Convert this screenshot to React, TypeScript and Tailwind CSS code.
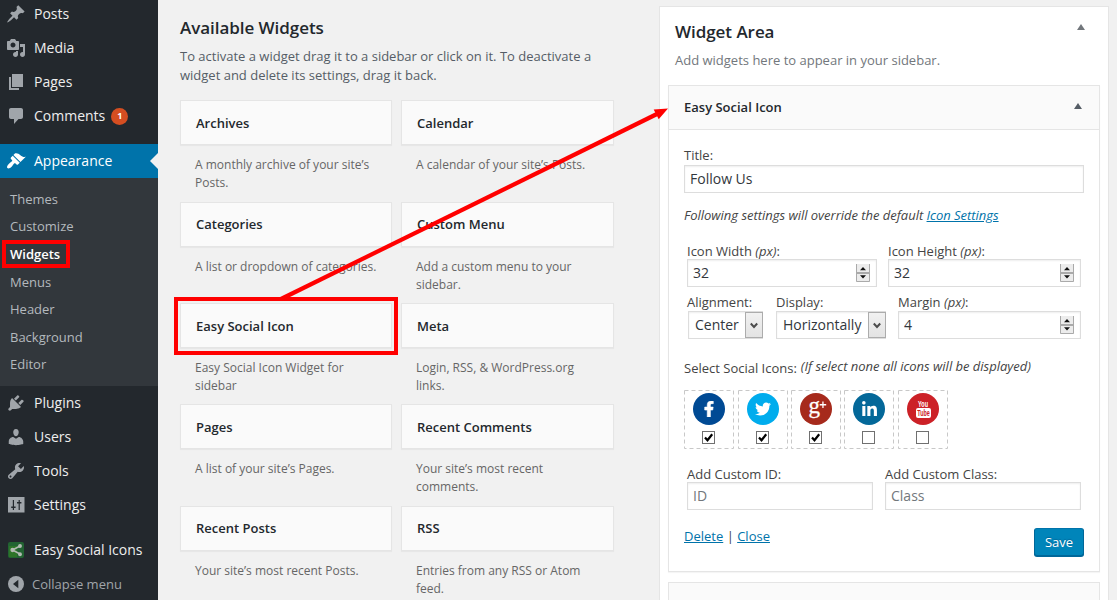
import React from "react";
import { FaFacebookF, FaTwitter, FaLinkedinIn } from "react-icons/fa";

const icons = {
  posts:
    "M10.44 3.02l1.82-1.82 6.36 6.35-1.83 1.82c-1.05-.68-2.48-.57-3.41.36l-.75.75c-.92.93-1.04 2.35-.35 3.41l-1.83 1.82-2.41-2.41-2.8 2.79c-.42.42-3.38 2.71-3.8 2.29s1.86-3.39 2.28-3.81l2.79-2.79L4.1 9.36l1.83-1.82c1.05.69 2.48.57 3.4-.36l.75-.75c.93-.92 1.05-2.35.36-3.41z",
  media:
    "M13 11V4c0-.55-.45-1-1-1h-1.67L9 1H5L3.67 3H2c-.55 0-1 .45-1 1v7c0 .55.45 1 1 1h10c.55 0 1-.45 1-1zM7 4.5c1.38 0 2.5 1.12 2.5 2.5S8.38 9.5 7 9.5 4.5 8.38 4.5 7 5.62 4.5 7 4.5zM14 6h5v10.5c0 1.38-1.12 2.5-2.5 2.5S14 17.88 14 16.5s1.12-2.5 2.5-2.5c.17 0 .34.02.5.05V9h-3V6zm-4 8.05V13h2v3.5c0 1.38-1.12 2.5-2.5 2.5S7 17.88 7 16.5 8.12 14 9.5 14c.17 0 .34.02.5.05z",
  pages: "M6 15V2h11v13H6zm-1 1h8v2H3V5h2v11z",
  comments:
    "M5 2h10c1.1 0 2 .9 2 2v7c0 1.1-.9 2-2 2h-2.500l-4.500 5v-5H5c-1.1 0-2-.9-2-2V4c0-1.1.9-2 2-2z",
  appearance:
    "M14.48 11.06L7.41 3.99l1.5-1.5c.5-.56 2.3-.47 3.51.32 1.21.8 1.43 1.28 2.91 2.1 1.18.64 2.45 1.26 4.45.85zm-.71.71L6.7 4.7 4.93 6.47c-.39.39-.39 1.02 0 1.41l1.06 1.06c.39.39.39 1.03 0 1.42-.6.6-1.43 1.11-2.21 1.69-.35.26-.7.53-1.01.84C1.43 14.23.4 16.08 1.4 17.07c.99 1 2.84-.03 4.18-1.36.31-.31.58-.66.85-1.02.57-.78 1.08-1.61 1.69-2.21.39-.39 1.02-.39 1.41 0l1.06 1.06c.39.39 1.02.39 1.41 0z",
  plugins:
    "M13.11 4.36L9.87 7.6 8 5.73l3.24-3.24c.35-.34 1.05-.2 1.56.32.52.51.66 1.21.31 1.55zm-8 1.77l.91-1.12 9.01 9.01-1.19.84c-.71.71-2.63 1.16-3.82 1.16H6.14L4.9 17.26c-.59.59-1.54.59-2.12 0-.59-.58-.59-1.53 0-2.12l1.24-1.24v-3.88c0-1.13.4-3.19 1.09-3.89zm7.26 3.97l3.24-3.24c.34-.35 1.04-.21 1.55.31.52.51.66 1.21.31 1.55l-3.24 3.25z",
  users:
    "M10 9.25c-2.27 0-2.73-3.44-2.73-3.44C7 4.02 7.82 2 9.97 2c2.16 0 2.98 2.02 2.71 3.81 0 0-.41 3.44-2.68 3.44zm0 2.57L12.72 10c2.39 0 4.52 2.33 4.52 4.53v2.49s-3.65 1.13-7.24 1.13c-3.65 0-7.24-1.13-7.24-1.13v-2.49c0-2.25 1.94-4.48 4.47-4.48z",
  tools:
    "M16.68 9.77c-1.34 1.34-3.3 1.67-4.95.99l-5.41 6.52c-.99.99-2.59.99-3.58 0s-.99-2.59 0-3.57l6.52-5.42c-.68-1.65-.35-3.61.99-4.95 1.28-1.28 3.12-1.62 4.72-1.06l-2.89 2.89 2.82 2.82 2.86-2.87c.53 1.58.18 3.39-1.08 4.65zM3.81 16.21c.4.39 1.04.39 1.43 0 .4-.4.4-1.04 0-1.43-.39-.4-1.03-.4-1.43 0-.39.39-.39 1.03 0 1.43z",
  settings:
    "M2 2h16.500v15.500h-16.500zM6.800 5v6.500H5.200v1.500h1.600v2h1.200v-2h1.600v-1.500h-1.600V5zM12.600 5v2H11v1.500h1.600V15h1.200V8.500h1.600V7h-1.600V5z",
};

function Glyph({ d }: { d: string }) {
  return (
    <svg viewBox="0 0 20 20" className="h-5 w-5 shrink-0" fill="currentColor">
      <path fillRule="evenodd" d={d} />
    </svg>
  );
}

function MenuRow({ d, label, badge }: { d: string; label: string; badge?: string }) {
  return (
    <a className="flex h-[34px] items-center gap-2 pl-1.5 text-[14px] text-[#eeeeee]">
      <span className="text-[#a0a5aa]">
        <Glyph d={d} />
      </span>
      <span className="pb-0.5">{label}</span>
      {badge && (
        <span className="-ml-0.5 flex h-[17px] w-[17px] items-center justify-center rounded-full bg-[#d54e21] text-[9px] font-bold text-white">
          {badge}
        </span>
      )}
    </a>
  );
}

const submenu = ["Themes", "Customize", "Widgets", "Menus", "Header", "Background", "Editor"];

function Sidebar() {
  return (
    <nav className="h-[600px] w-[158px] shrink-0 overflow-hidden bg-[#23282d]">
      <div className="-mt-[3px]">
        <MenuRow d={icons.posts} label="Posts" />
        <MenuRow d={icons.media} label="Media" />
        <MenuRow d={icons.pages} label="Pages" />
        <MenuRow d={icons.comments} label="Comments" badge="1" />
      </div>
      <a className="mt-[11px] flex h-[34px] items-center gap-2 bg-[#0073aa] pl-1.5 text-[14px] text-white">
        <Glyph d={icons.appearance} />
        <span className="pb-0.5">Appearance</span>
        <svg viewBox="0 0 8 16" className="ml-auto h-4 w-2" fill="#f1f1f1">
          <path d="M8 0v16L0 8z" />
        </svg>
      </a>
      <div className="h-[208px] bg-[#32373c] pt-[7.75px]">
        {submenu.map((s) => (
          <a
            key={s}
            className={
              s === "Widgets"
                ? "relative flex h-[27.6px] items-center pl-2.5 text-[13px] font-semibold text-white"
                : "flex h-[27.6px] items-center pl-2.5 text-[13px] text-[#b4b9be]"
            }
          >
            {s}
            {s === "Widgets" && (
              <span className="absolute top-[-0.95px] left-0.5 h-7 w-[68px] border-4 border-[#ff0000]" />
            )}
          </a>
        ))}
      </div>
      <MenuRow d={icons.plugins} label="Plugins" />
      <MenuRow d={icons.users} label="Users" />
      <MenuRow d={icons.tools} label="Tools" />
      <MenuRow d={icons.settings} label="Settings" />
      <a className="mt-[11px] flex h-[34px] items-center gap-2.5 pl-2 text-[14px] whitespace-nowrap text-[#eeeeee]">
        <svg viewBox="0 0 16 16" className="h-4 w-4 shrink-0">
          <rect width="16" height="16" rx="2" fill="#226332" />
          <rect x="1" y="4" width="8" height="11" fill="#2d7428" />
          <g fill="#b3bab3" stroke="#b3bab3" strokeWidth="1.5">
            <path d="M12 4L4.500 8l7.500 4" fill="none" />
            <circle cx="12" cy="4" r="1.200" />
            <circle cx="4.500" cy="8" r="1.400" />
            <circle cx="12" cy="12.200" r="1.200" />
          </g>
        </svg>
        <span className="pb-0.5">Easy Social Icons</span>
      </a>
      <a className="flex h-[34px] items-center gap-2 pl-2 text-[13px] text-[#a0a5aa]">
        <svg viewBox="0 0 16 16" className="h-4 w-4 shrink-0">
          <circle cx="8" cy="8" r="8" fill="#a0a5aa" />
          <path d="M10.300 3.800v8.400L5 8z" fill="#23282d" />
        </svg>
        <span className="pt-px">Collapse menu</span>
      </a>
    </nav>
  );
}

const widgets: [string, string][] = [
  ["Archives", "A monthly archive of your site’s Posts."],
  ["Calendar", "A calendar of your site’s Posts."],
  ["Categories", "A list or dropdown of categories."],
  ["Custom Menu", "Add a custom menu to your sidebar."],
  ["Easy Social Icon", "Easy Social Icon Widget for sidebar"],
  ["Meta", "Login, RSS, & WordPress.org links."],
  ["Pages", "A list of your site’s Pages."],
  ["Recent Comments", "Your site’s most recent comments."],
  ["Recent Posts", "Your site’s most recent Posts."],
  ["RSS", "Entries from any RSS or Atom feed."],
];

function AvailableWidgets() {
  return (
    <section className="w-[434px] shrink-0">
      <h2 className="mt-4 text-[17px] leading-6 font-semibold tracking-[-0.05px] text-[#23282d]">Available Widgets</h2>
      <p className="mt-[7px] h-[53.15px] text-[13px] leading-[19px] text-[#555d66]">
        To activate a widget drag it to a sidebar or click on it. To deactivate a widget and delete its settings, drag
        it back.
      </p>
      <div className="grid auto-rows-[101.4px] grid-cols-[212px_213px] gap-x-[9px]">
        {widgets.map(([title, text]) => (
          <div key={title} className="relative">
            <h3 className="flex h-[45px] items-center border border-[#e5e5e5] bg-[#fafafa] pt-[1.9px] pl-[15px] text-[13px] font-semibold text-[#23282d] shadow-[0_1px_1px_rgba(0,0,0,0.04)]">
              {title}
            </h3>
            <p className="mt-[11px] pr-3 pl-[15px] text-[12px] leading-[18px] text-[#666666]">{text}</p>
            {title === "Easy Social Icon" && (
              <span className="absolute -top-1.5 -left-1.5 h-[58px] w-[224px] border-4 border-[#ff0000]" />
            )}
          </div>
        ))}
      </div>
    </section>
  );
}

const fieldBox =
  "h-7 w-full border border-[#dddddd] bg-white px-[5px] pb-0.5 text-[14px] text-[#32373c] shadow-[inset_0_1px_2px_rgba(0,0,0,0.07)] outline-none placeholder:text-[#72777c]";

function NumberField({ value }: { value: string }) {
  return (
    <div className="relative flex">
      <input className={fieldBox} defaultValue={value} />
      <svg viewBox="0 0 14 18" className="absolute top-[5px] right-[7px] h-[18px] w-3.5">
        <rect width="14" height="18" fill="#ececec" />
        <path d="M.5 0v17.500h13V0M.5 8.500h13M.5 9.500h13" stroke="#aaaaaa" fill="none" />
        <path d="M7 3l3 3.200H4zM7 14.500l3-3.200H4z" fill="#111111" />
      </svg>
    </div>
  );
}

function SelectBox({ value }: { value: string }) {
  return (
    <div className="flex h-7 items-stretch justify-between border border-[#dddddd] bg-white text-[14px] text-[#32373c] shadow-[inset_0_1px_2px_rgba(0,0,0,0.07)]">
      <span className="flex items-center pb-0.5 pl-1.5">{value}</span>
      <span className="-mr-px flex w-[18px] items-center justify-center border border-[#acacac] bg-linear-to-b from-[#f1f1f1] to-[#e3e3e3] pr-px">
        <svg viewBox="0 0 8 7" className="h-[7px] w-2" fill="none" stroke="#4c4c4c" strokeWidth="2">
          <path d="M.8 1.500L4 5l3.200-3.500" />
        </svg>
      </span>
    </div>
  );
}

function Px({ children }: { children: string }) {
  return (
    <span className="block h-4 text-[13px] leading-4 whitespace-nowrap">
      {children} <i>(px)</i>:
    </span>
  );
}

function Label({ children }: { children: string }) {
  return <span className="block h-4 text-[13px] leading-4 whitespace-nowrap">{children}</span>;
}

function GooglePlus() {
  return (
    <svg viewBox="0 0 32 32" className="h-8 w-8" fill="#ffffff">
      <text x="8.500" y="20" fontFamily="Liberation Serif, serif" fontSize="23" stroke="#ffffff" strokeWidth=".3">
        g
      </text>
      <path d="M22.300 8.500h1.300v2.600h2.600v1.300h-2.600V15h-1.300v-2.600h-2.600v-1.300h2.600z" />
    </svg>
  );
}

function YouTube() {
  return (
    <svg viewBox="0 0 32 32" className="h-8 w-8">
      <g fontFamily="Liberation Sans, sans-serif" fontWeight="700" textAnchor="middle">
        <text x="16" y="14" fontSize="8.500" fill="#ffffff" textLength="10" lengthAdjust="spacingAndGlyphs">
          You
        </text>
        <rect x="9" y="15" width="15" height="10" rx="2" fill="#ffffff" />
        <text x="16.500" y="23.200" fontSize="8.500" fill="#cc2127" textLength="12.500" lengthAdjust="spacingAndGlyphs">
          Tube
        </text>
      </g>
    </svg>
  );
}

const socials = [
  { id: "facebook", gap: "", cls: "bg-[#004a94]", icon: <FaFacebookF size={16} stroke="#ffffff" strokeWidth={20} />, on: true },
  { id: "twitter", gap: "ml-1", cls: "bg-[#00aced]", icon: <FaTwitter size={16} />, on: true },
  { id: "google", gap: "ml-[3px]", cls: "bg-[#a62a1c]", icon: <GooglePlus />, on: true },
  { id: "linkedin", gap: "ml-[3px]", cls: "bg-[#046899]", icon: <FaLinkedinIn size={17} />, on: false },
  { id: "youtube", gap: "ml-1", cls: "bg-[#cc2127]", icon: <YouTube />, on: false },
];

function SocialBox({ gap, cls, icon, on }: { gap: string; cls: string; icon: React.ReactNode; on: boolean }) {
  return (
    <div className={`relative flex h-[59px] w-[50px] flex-col items-center pt-[3px] ${gap}`}>
      <svg className="absolute inset-0 h-[59px] w-[50px]" fill="none">
        <rect x=".5" y=".5" width="49" height="58" stroke="#c8c8c8" strokeDasharray="4 3" />
      </svg>
      <span className={`flex h-8 w-8 items-center justify-center rounded-full text-white ${cls}`}>{icon}</span>
      <svg viewBox="0 0 13 13" className="mt-1.5 mr-px h-[13px] w-[13px]">
        <rect x=".5" y=".5" width="12" height="12" fill="#ffffff" stroke="#707070" />
        {on && <path d="M3 6.500L5.500 9.300 10.200 3.300" fill="none" stroke="#000000" strokeWidth="2.200" />}
      </svg>
    </div>
  );
}

function UpArrow({ cls }: { cls: string }) {
  return (
    <svg viewBox="0 0 8 6" className={`h-1.5 w-2 ${cls}`} fill="currentColor">
      <path d="M4 0l4 6H0z" />
    </svg>
  );
}

function WidgetArea() {
  return (
    <section className="mt-1.5 ml-[45px] h-[620px] w-[450px] shrink-0 border border-[#e5e5e5] bg-white px-2">
      <div className="flex h-[37px] items-end justify-between pr-[15px] pl-[7px]">
        <h2 className="text-[17px] leading-6 font-semibold tracking-[-0.05px] text-[#23282d]">Widget Area</h2>
        <UpArrow cls="mb-3.5 text-[#72777c]" />
      </div>
      <p className="mt-[7px] h-[34px] pl-[7px] text-[13px] leading-[19px] text-[#72777c]">
        Add widgets here to appear in your sidebar.
      </p>
      <div className="h-[487px] border border-[#e5e5e5] bg-white text-[#444444] shadow-[0_1px_1px_rgba(0,0,0,0.04)]">
        <div className="flex h-[44px] items-center justify-between border-b border-[#e5e5e5] bg-[#fafafa] pr-[17px] pl-[15px]">
          <h3 className="text-[13px] font-semibold text-[#23282d]">Easy Social Icon</h3>
          <UpArrow cls="mb-[3px] text-[#555d66]" />
        </div>
        <div className="px-[15px] pt-[17px]">
          <div className="h-[18px] text-[13px] leading-4">Title:</div>
          <input className={fieldBox} defaultValue="Follow Us" />
          <p className="mt-[13px] text-[13px] leading-[19px] tracking-[-0.02px] whitespace-nowrap italic">
            Following settings will override the default <a className="text-[#0073aa] underline">Icon Settings</a>
          </p>
          <div className="mt-[18px] flex gap-[11px] pl-[3px]">
            <div className="w-[190px]">
              <Px>Icon Width</Px>
              <NumberField value="32" />
            </div>
            <div className="w-[193px]">
              <Px>Icon Height</Px>
              <NumberField value="32" />
            </div>
          </div>
          <div className="mt-[7px] flex pl-1">
            <div className="w-[75px]">
              <div className="-ml-px pb-px">
                <Label>Alignment:</Label>
              </div>
              <SelectBox value="Center" />
            </div>
            <div className="ml-[13px] w-[110px]">
              <div className="pb-px">
                <Label>Display:</Label>
              </div>
              <SelectBox value="Horizontally" />
            </div>
            <div className="ml-3 w-[183px]">
              <div className="pb-px">
                <Px>Margin</Px>
              </div>
              <NumberField value="4" />
            </div>
          </div>
          <div className="mt-[19px] flex gap-1 text-[13px] leading-[19px] whitespace-nowrap">
            <span className="pt-px">Select Social Icons:</span>
            <i className="-mt-px tracking-[-0.01px]">(If select none all icons will be displayed)</i>
          </div>
          <div className="mt-3 flex">
            {socials.map((s) => (
              <SocialBox key={s.id} gap={s.gap} cls={s.cls} icon={s.icon} on={s.on} />
            ))}
          </div>
          <div className="mt-[17px] flex gap-3 pl-[3px]">
            <div className="w-[186px]">
              <Label>Add Custom ID:</Label>
              <input className={fieldBox} placeholder="ID" />
            </div>
            <div className="w-[196px]">
              <Label>Add Custom Class:</Label>
              <input className={fieldBox} placeholder="Class" />
            </div>
          </div>
          <div className="mt-[18px] flex items-start justify-between">
            <p className="-mt-px text-[13px] leading-[18px]">
              <a className="text-[#0073aa] underline">Delete</a>
              <span> | </span>
              <a className="text-[#0073aa] underline">Close</a>
            </p>
            <button className="h-[28px] w-[50px] rounded-[3px] border border-[#006799] border-t-[#0073aa] bg-[#0085ba] text-[13px] leading-[18px] text-white shadow-[0_1px_0_#006799] [text-shadow:0_-1px_1px_#006799]">
              Save
            </button>
          </div>
        </div>
      </div>
      <div className="mt-2.5 h-[46px] border border-[#e5e5e5] bg-[#fafafa]" />
    </section>
  );
}

export default function App() {
  return (
    <div className="relative flex h-[600px] w-[1117px] overflow-hidden bg-[#f1f1f1] font-['Open_Sans',sans-serif]">
      <Sidebar />
      <main className="flex min-w-0 flex-1 pl-[22px]">
        <AvailableWidgets />
        <WidgetArea />
      </main>
      <svg className="pointer-events-none absolute inset-0 h-[600px] w-[1117px]" viewBox="0 0 1117 600">
        <path d="M281 299L658 113.500" stroke="#ff0000" strokeWidth="4.200" />
        <path d="M668 108.500L653.700 109.500L658.700 119.300z" fill="#ff0000" />
      </svg>
    </div>
  );
}
